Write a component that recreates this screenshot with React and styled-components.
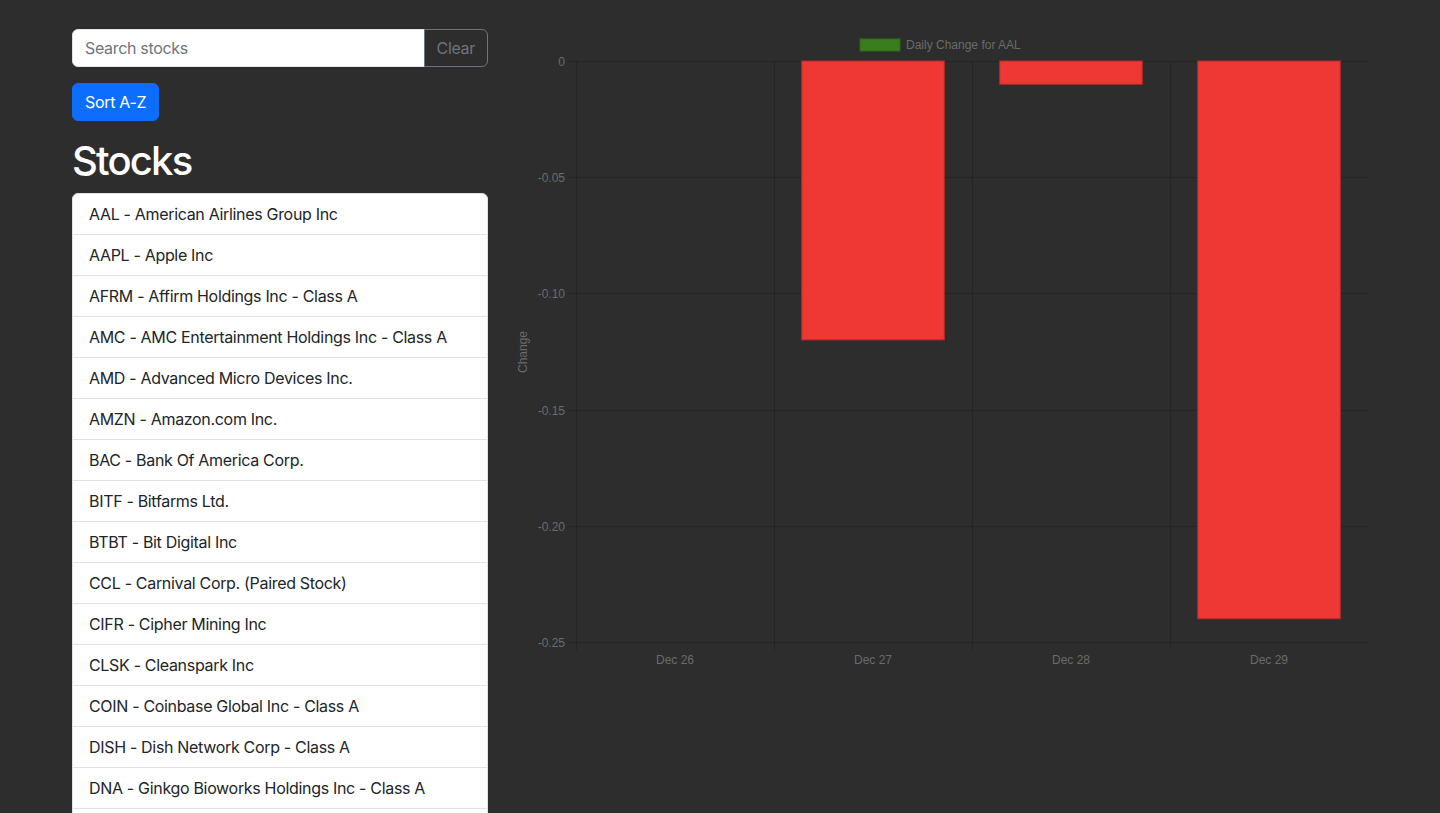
import React, { useState } from "react";
import styled, { createGlobalStyle } from "styled-components";

const GlobalStyle = createGlobalStyle`
  * { box-sizing: border-box; }
  body {
    margin: 0;
    background: #2d2d2d;
    font-family: Inter, "Noto Sans", "Liberation Sans", sans-serif;
    letter-spacing: -0.02em;
    color: #212529;
  }
`;

const Container = styled.div`
  width: 1320px;
  margin: 0 auto;
  padding: 29px 12px 0;
`;

const Row = styled.div`
  display: grid;
  grid-template-columns: 416px 856px;
  column-gap: 24px;
  align-items: start;
`;

const Column = styled.div`
  display: flex;
  flex-direction: column;
  align-items: flex-start;
`;

const InputGroup = styled.div`
  display: flex;
  width: 100%;
  margin-bottom: 16px;
`;

const SearchInput = styled.input`
  flex: 1;
  height: 38px;
  padding: 6px 12px;
  font: inherit;
  font-size: 16px;
  letter-spacing: inherit;
  color: #212529;
  background: #fff;
  border: 1px solid #dee2e6;
  border-radius: 6px 0 0 6px;
  outline: none;
  &::placeholder { color: #6c757d; }
`;

const ClearButton = styled.button`
  height: 38px;
  padding: 6px 12px;
  font: inherit;
  font-size: 16px;
  letter-spacing: inherit;
  color: #6c757d;
  background: transparent;
  border: 1px solid #6c757d;
  border-radius: 0 6px 6px 0;
  margin-left: -1px;
`;

const SortButton = styled.button`
  height: 38px;
  padding: 6px 12px;
  font: inherit;
  font-size: 16px;
  letter-spacing: inherit;
  color: #fff;
  background: #0d6efd;
  border: 1px solid #0d6efd;
  border-radius: 6px;
  margin-bottom: 16px;
`;

const Heading = styled.h1`
  margin: 0 0 8px;
  font-size: 40px;
  font-weight: 500;
  line-height: 48px;
  letter-spacing: -0.045em;
  color: #fff;
`;

const List = styled.ul`
  width: 100%;
  margin: 0;
  padding: 0;
  list-style: none;
  background: #fff;
  border-radius: 6px 6px 0 0;
  border: 1px solid #dee2e6;
`;

const ListItem = styled.li`
  padding: 8px 16px;
  font-size: 16px;
  line-height: 24px;
  color: #212529;
  border-top: ${(p) => (p.$first ? "none" : "1px solid #dee2e6")};
`;

const ChartWrap = styled.div`
  width: 856px;
  height: 660px;
  letter-spacing: 0;
`;

const stocks = [
  "AAL - American Airlines Group Inc",
  "AAPL - Apple Inc",
  "AFRM - Affirm Holdings Inc - Class A",
  "AMC - AMC Entertainment Holdings Inc - Class A",
  "AMD - Advanced Micro Devices Inc.",
  "AMZN - Amazon.com Inc.",
  "BAC - Bank Of America Corp.",
  "BITF - Bitfarms Ltd.",
  "BTBT - Bit Digital Inc",
  "CCL - Carnival Corp. (Paired Stock)",
  "CIFR - Cipher Mining Inc",
  "CLSK - Cleanspark Inc",
  "COIN - Coinbase Global Inc - Class A",
  "DISH - Dish Network Corp - Class A",
  "DNA - Ginkgo Bioworks Holdings Inc - Class A",
  "F - Ford Motor Co.",
  "GOOGL - Alphabet Inc - Class A",
];

const changes = [
  { label: "Dec 26", value: 0 },
  { label: "Dec 27", value: -0.12 },
  { label: "Dec 28", value: -0.01 },
  { label: "Dec 29", value: -0.24 },
];

const PLOT = { left: 64, right: 856, top: 32, bottom: 613 };
const AXIS = "#6b6b6b";
const GRID = "#242424";

function ChangeChart() {
  const h = PLOT.bottom - PLOT.top;
  const step = (PLOT.right - PLOT.left) / changes.length;
  const yFor = (v) => PLOT.top + (-v / 0.25) * h;
  const ticks = [0, -0.05, -0.1, -0.15, -0.2, -0.25];
  const font = { fontFamily: '"Liberation Sans", Arial, sans-serif', fontSize: 12 };

  return (
    <svg width="856" height="660" viewBox="0 0 856 660">
      <rect x="348" y="10" width="40" height="12" fill="#3a7d1f" stroke="#2f6a18" />
      <text x="394" y="20" fill={AXIS} {...font}>Daily Change for AAL</text>

      {ticks.map((t) => {
        const y = Math.round(yFor(t)) + 0.5;
        return (
          <g key={t}>
            <line x1={PLOT.left - 8} x2={PLOT.right} y1={y} y2={y} stroke={GRID} />
            <text x="53" y={y + 4} textAnchor="end" fill={AXIS} {...font}>
              {t === 0 ? "0" : t.toFixed(2)}
            </text>
          </g>
        );
      })}

      {[0, 1, 2, 3, 4].map((j) => {
        const x = Math.round(PLOT.left + j * step) + 0.5;
        return <line key={j} x1={x} x2={x} y1={PLOT.top} y2={PLOT.bottom + 8} stroke={GRID} />;
      })}

      {changes.map((c, i) => {
        const cx = PLOT.left + step * i + step / 2;
        const w = step * 0.72;
        const y2 = yFor(c.value);
        return (
          <g key={c.label}>
            {c.value !== 0 && (
              <rect
                x={cx - w / 2}
                y={PLOT.top}
                width={w}
                height={y2 - PLOT.top}
                fill="#ef3834"
                stroke="#b32d2a"
                strokeWidth="1"
              />
            )}
            <text x={cx} y="635" textAnchor="middle" fill={AXIS} {...font}>{c.label}</text>
          </g>
        );
      })}

      <text
        transform="translate(15 323) rotate(-90)"
        textAnchor="middle"
        fill={AXIS}
        {...font}
      >
        Change
      </text>
    </svg>
  );
}

export default function App() {
  const [query, setQuery] = useState("");

  return (
    <>
      <GlobalStyle />
      <Container>
        <Row>
          <Column>
            <InputGroup>
              <SearchInput
                placeholder="Search stocks"
                value={query}
                onChange={(e) => setQuery(e.target.value)}
              />
              <ClearButton onClick={() => setQuery("")}>Clear</ClearButton>
            </InputGroup>
            <SortButton>Sort A-Z</SortButton>
            <Heading>Stocks</Heading>
            <List>
              {stocks.map((s, i) => (
                <ListItem key={s} $first={i === 0}>{s}</ListItem>
              ))}
            </List>
          </Column>
          <ChartWrap>
            <ChangeChart />
          </ChartWrap>
        </Row>
      </Container>
    </>
  );
}
